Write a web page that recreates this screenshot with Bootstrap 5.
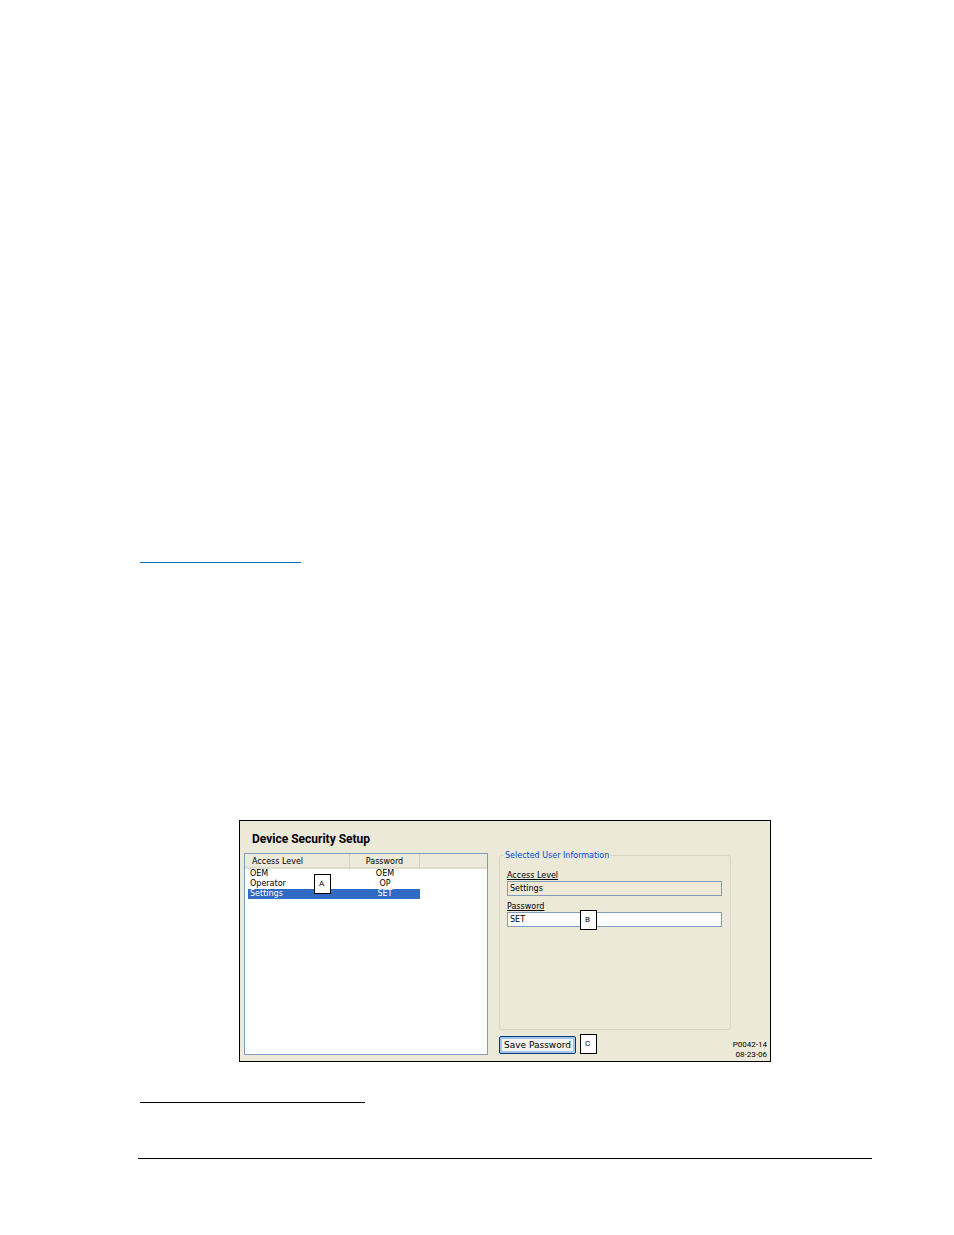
<!DOCTYPE html>
<html lang="en">
<head>
<meta charset="utf-8">
<meta name="viewport" content="width=device-width, initial-scale=1">
<title>Device Security Setup</title>
<link rel="stylesheet" href="https://cdn.jsdelivr.net/npm/bootstrap@5.3.0/dist/css/bootstrap.min.css">
<style>
body { background: #fff; color: #000; font: 8px/10px "DejaVu Sans", Verdana, sans-serif; }
.sheet { padding: 562px 82px 76px 138px; }
.rule-ref, .rule-note { height: 1px; margin-left: 2px; }
.rule-ref { max-width: 161px; background: #0072bc; }
.rule-note { max-width: 225px; background: #000; margin-top: 40px; }
.rule-foot { height: 1px; background: #000; margin-top: 55px; }
.setup { max-width: 532px; margin-top: 257px; padding: 10px 3px 1px 4px; background: #ece9d8; border: 1px solid #000; }
.setup h1 { font: bold 12px/16px Roboto, Arial, sans-serif; margin: 0 0 6px 8px; }
.users { flex: 0 0 244px; height: 202px; margin-right: 11px; background: #fff; border: 1px solid #7f9db9; }
.users-head { position: absolute; inset: 0 0 auto 0; height: 15px; background: #ebeadb; border-bottom: 2px solid #dedccb; }
.users table { position: relative; width: 175px; border-collapse: separate; border-spacing: 0; table-layout: fixed; }
.users th { height: 15px; padding: 2px 0 0 7px; font-weight: 400; line-height: 11px; vertical-align: top; border-right: 1px solid #d3d0bf; }
.users td { height: 10px; padding: 0 0 0 5px; line-height: 10px; }
.users th:last-child, .users td:last-child { padding-left: 0; text-align: center; }
.users .picked td { color: #fff; background: #316ac5; }
.users .picked td:first-child { background: linear-gradient(#316ac5, #316ac5) 3px 0 no-repeat; }
.details { padding-top: 2px; }
.group { position: relative; height: 175px; margin-right: 36px; padding: 15px 8px 0 7px; border: 1px solid #d8d6c2; border-radius: 3px; }
.group legend { position: absolute; top: -5px; left: 3px; float: none; width: auto; margin: 0; padding: 0 2px; font-size: 8px; line-height: 10px; color: #0046d5; background: #ece9d8; }
.group label { display: block; text-decoration: underline; line-height: 10px; }
.group .form-control { height: 15px; min-height: 0; padding: 0 2px; font-size: 8px; line-height: 12px; color: #000; border: 1px solid #7f9db9; border-radius: 0; background: #fff; margin-bottom: 6px; }
.group .form-control[readonly] { background: #ece9d8; }
.tag { width: 17px; height: 20px; border: 1px solid #000; background: #fff; font: 8px/18px Roboto, Arial, sans-serif; text-align: center; padding-right: 2px; }
.tag-a { position: absolute; left: 69px; top: 20px; }
.tag-b { position: absolute; left: 73px; top: -2px; }
.save { width: 77px; height: 18px; margin-top: 2px; padding: 0; font-size: 9px; line-height: 12px; color: #000; background: #f4f3ee; border: 1px solid #003c74; border-radius: 2px; box-shadow: inset 0 0 0 2px #a6c4f0; }
.revision { font: 8px/10px Roboto, Arial, sans-serif; text-align: right; padding-top: 6px; }
</style>
</head>
<body>
<main class="sheet">
  <div class="rule-ref"></div>
  <section class="setup mx-auto">
    <h1>Device Security Setup</h1>
    <div class="d-flex">
      <div class="users position-relative">
        <div class="users-head"></div>
        <table>
          <colgroup><col style="width:105px"><col style="width:70px"></colgroup>
          <thead><tr><th scope="col">Access Level</th><th scope="col">Password</th></tr></thead>
          <tbody>
            <tr><td>OEM</td><td>OEM</td></tr>
            <tr><td>Operator</td><td>OP</td></tr>
            <tr class="picked"><td>Settings</td><td>SET</td></tr>
          </tbody>
        </table>
        <span class="tag tag-a">A</span>
      </div>
      <div class="details flex-grow-1">
        <fieldset class="group">
          <legend>Selected User Information</legend>
          <label for="level">Access Level</label>
          <input class="form-control" id="level" type="text" value="Settings" readonly>
          <label for="password">Password</label>
          <div class="position-relative">
            <input class="form-control" id="password" type="text" value="SET">
            <span class="tag tag-b">B</span>
          </div>
        </fieldset>
        <div class="d-flex align-items-start mt-1">
          <button class="btn save" type="button">Save Password</button>
          <span class="tag ms-1">C</span>
          <div class="revision ms-auto">P0042-14<br>08-23-06</div>
        </div>
      </div>
    </div>
  </section>
  <div class="rule-note"></div>
  <div class="rule-foot"></div>
</main>
<script src="https://cdn.jsdelivr.net/npm/bootstrap@5.3.0/dist/js/bootstrap.bundle.min.js"></script>
</body>
</html>
